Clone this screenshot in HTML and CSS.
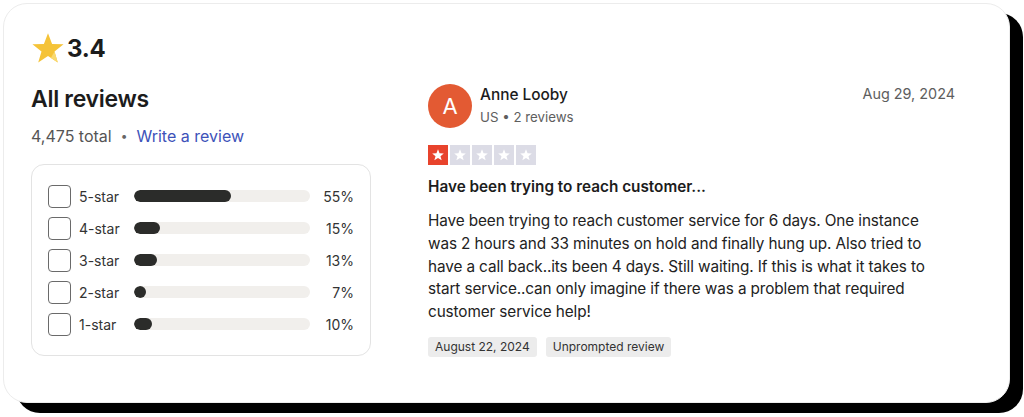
FILE: index.html
```html
<!DOCTYPE html>
<html lang="en">
<head>
<meta charset="utf-8">
<title>Reviews</title>
<link rel="stylesheet" href="styles.css">
</head>
<body>
<div class="card">
  <div class="rating">
    <svg class="big-star" viewBox="0 0 24 24" width="34" height="34"><path d="M12 1.5l2.9 7.6 8.1.3-6.4 5 2.3 7.9L12 17.7l-6.9 4.6 2.3-7.9-6.4-5 8.1-.3z" fill="#f5c338"/><path d="M16.6 14.4l2.3 7.9L14 19z" fill="#f9d970"/></svg>
    <span class="score">3.4</span>
  </div>
  <div class="cols">
    <div class="summary">
      <h2 class="title">All reviews</h2>
      <div class="totals"><span>4,475 total</span><span class="dot">•</span><a class="link" href="#">Write a review</a></div>
      <div class="dist">
        <div class="row"><span class="box"></span><span class="lbl">5-star</span><span class="track"><span class="fill" style="width:55%"></span></span><span class="pct">55%</span></div>
        <div class="row"><span class="box"></span><span class="lbl">4-star</span><span class="track"><span class="fill" style="width:15%"></span></span><span class="pct">15%</span></div>
        <div class="row"><span class="box"></span><span class="lbl">3-star</span><span class="track"><span class="fill" style="width:13%"></span></span><span class="pct">13%</span></div>
        <div class="row"><span class="box"></span><span class="lbl">2-star</span><span class="track"><span class="fill" style="width:7%"></span></span><span class="pct">7%</span></div>
        <div class="row"><span class="box"></span><span class="lbl">1-star</span><span class="track"><span class="fill" style="width:10%"></span></span><span class="pct">10%</span></div>
      </div>
    </div>
    <div class="review">
      <div class="head">
        <div class="avatar">A</div>
        <div class="who">
          <div class="name">Anne Looby</div>
          <div class="meta">US • 2 reviews</div>
        </div>
        <div class="date">Aug 29, 2024</div>
      </div>
      <div class="stars">
        <span class="s on"><svg viewBox="0 0 24 24"><path d="M12 3.5l2.3 6 6.4.2-5 4 1.8 6.3L12 16.4l-5.5 3.6 1.8-6.3-5-4 6.4-.2z" fill="#fff"/></svg></span>
        <span class="s"><svg viewBox="0 0 24 24"><path d="M12 3.5l2.3 6 6.4.2-5 4 1.8 6.3L12 16.4l-5.5 3.6 1.8-6.3-5-4 6.4-.2z" fill="#fff"/></svg></span>
        <span class="s"><svg viewBox="0 0 24 24"><path d="M12 3.5l2.3 6 6.4.2-5 4 1.8 6.3L12 16.4l-5.5 3.6 1.8-6.3-5-4 6.4-.2z" fill="#fff"/></svg></span>
        <span class="s"><svg viewBox="0 0 24 24"><path d="M12 3.5l2.3 6 6.4.2-5 4 1.8 6.3L12 16.4l-5.5 3.6 1.8-6.3-5-4 6.4-.2z" fill="#fff"/></svg></span>
        <span class="s"><svg viewBox="0 0 24 24"><path d="M12 3.5l2.3 6 6.4.2-5 4 1.8 6.3L12 16.4l-5.5 3.6 1.8-6.3-5-4 6.4-.2z" fill="#fff"/></svg></span>
      </div>
      <h3 class="rtitle">Have been trying to reach customer...</h3>
      <p class="body">Have been trying to reach customer service for 6 days. One instance was 2 hours and 33 minutes on hold and finally hung up. Also tried to have a call back..its been 4 days. Still waiting. If this is what it takes to start service..can only imagine if there was a problem that required customer service help!</p>
      <div class="tags"><span class="tag">August 22, 2024</span><span class="tag">Unprompted review</span></div>
    </div>
  </div>
</div>
</body>
</html>
```

FILE: styles.css
```css
* { box-sizing: border-box; }
html, body { margin: 0; padding: 0; background: #fff; }
body {
  font-family: Inter, "Liberation Sans", Arial, sans-serif;
  color: #1c1c1c;
  padding: 3px 0 14px 3px;
  min-height: 417px;
}
.card {
  width: 1007px;
  height: 400px;
  background: #fff;
  border: 1px solid #ececec;
  border-radius: 24px;
  box-shadow: 13px 10px 0 #000;
  padding: 27px 54px 0 27px;
}
.rating {
  display: flex;
  align-items: center;
  gap: 2px;
  height: 34px;
}
.big-star { display: block; }
.score {
  font-size: 24px;
  font-weight: 700;
  letter-spacing: -0.2px;
}
.cols {
  display: grid;
  grid-template-columns: 340px 1fr;
  column-gap: 57px;
  margin-top: 19px;
}
.title {
  margin: 0;
  font-size: 23px;
  font-weight: 600;
  line-height: 30px;
  letter-spacing: -0.3px;
}
.totals {
  margin-top: 11px;
  font-size: 16px;
  line-height: 22px;
  color: #555;
  display: flex;
  align-items: center;
}
.dot { margin: 0 9px; font-size: 12px; color: #666; }
.link { color: #3d52b9; text-decoration: none; }
.dist {
  margin-top: 17px;
  border: 1px solid #e3e3e3;
  border-radius: 13px;
  padding: 15px 16px;
}
.row {
  display: flex;
  align-items: center;
  height: 32px;
}
.box {
  width: 23px;
  height: 23px;
  border: 1.3px solid #6a6a6a;
  border-radius: 4px;
  flex: none;
}
.lbl {
  width: 55px;
  margin-left: 8px;
  font-size: 14px;
  color: #333;
}
.track {
  width: 176px;
  height: 12px;
  border-radius: 6px;
  background: #f1efec;
  overflow: hidden;
  display: block;
}
.fill {
  display: block;
  height: 100%;
  min-width: 12px;
  background: #2b2c2a;
  border-radius: 6px;
}
.pct {
  flex: 1;
  text-align: right;
  font-size: 14px;
  color: #333;
}
.head {
  display: flex;
  align-items: flex-start;
}
.avatar {
  width: 44px;
  height: 44px;
  border-radius: 50%;
  background: #e35a33;
  color: #fff;
  font-size: 22px;
  display: flex;
  align-items: center;
  justify-content: center;
  flex: none;
}
.who { margin-left: 8px; flex: 1; }
.name { font-size: 15.4px; font-weight: 500; line-height: 22px; }
.meta { font-size: 13.3px; color: #5e5e5e; line-height: 20px; margin-top: 1px; }
.date { font-size: 14.4px; color: #5e5e5e; line-height: 20px; }
.stars {
  display: flex;
  gap: 2px;
  margin-top: 17px;
}
.s {
  width: 20px;
  height: 20px;
  background: #dcdce6;
  display: flex;
  align-items: center;
  justify-content: center;
}
.s svg { width: 16px; height: 16px; display: block; }
.s.on { background: #e8432c; }
.rtitle {
  margin: 10px 0 0;
  font-size: 15.3px;
  font-weight: 600;
  line-height: 24px;
}
.body {
  margin: 11px 0 0;
  max-width: 515px;
  font-size: 15.3px;
  line-height: 22.8px;
  color: #222;
  letter-spacing: -0.1px;
}
.tags {
  display: flex;
  gap: 9px;
  margin-top: 13px;
}
.tag {
  background: #ececec;
  border-radius: 3px;
  font-size: 12px;
  line-height: 20px;
  padding: 0 7px;
  color: #333;
}
```
